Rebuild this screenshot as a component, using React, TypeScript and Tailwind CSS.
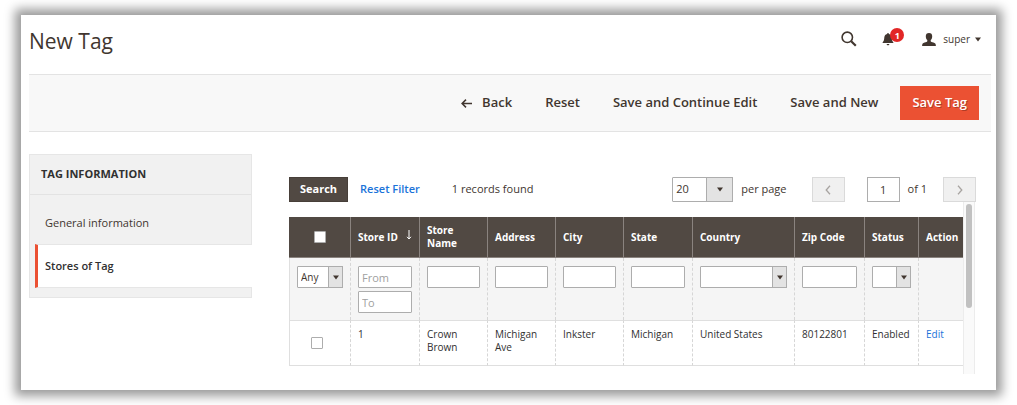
import type { ReactNode } from "react";

function Caret({ className = "" }: { className?: string }) {
  return (
    <svg viewBox="0 0 6 5" className={className} fill="currentColor" aria-hidden="true">
      <path d="M0 0.4h6L3 4.6z" />
    </svg>
  );
}

function SelectBox({
  label,
  options,
  className,
  arrowClass,
}: {
  label: string;
  options: string[];
  className: string;
  arrowClass: string;
}) {
  return (
    <span className={`relative block ${className}`}>
      <select
        aria-label={label}
        className="block h-full w-full appearance-none rounded-[1px] border border-[#adadad] bg-white pl-[3px] text-[#41362f]"
      >
        {options.map((o) => (
          <option key={o}>{o}</option>
        ))}
      </select>
      <span
        className={`pointer-events-none absolute inset-y-0 right-0 flex items-center justify-center border border-[#adadad] bg-[#e3e3e3] text-[#41362f] ${arrowClass}`}
      >
        <Caret className="h-[5px] w-[6px]" />
      </span>
    </span>
  );
}

function TextBox({ label, placeholder }: { label: string; placeholder?: string }) {
  return (
    <input
      type="text"
      aria-label={label}
      placeholder={placeholder}
      className="block h-[22px] w-full rounded-[1px] border border-[#adadad] bg-white px-[3px] text-[11px] placeholder:text-[#a0a0a0]"
    />
  );
}

function CheckBox({ label }: { label: string }) {
  return (
    <input
      type="checkbox"
      aria-label={label}
      className="block h-3 w-3 appearance-none rounded-[1px] border border-[#adadad] bg-white checked:bg-[#514943]"
    />
  );
}

function ActionButton({ children }: { children: ReactNode }) {
  return (
    <button type="button" className="flex items-center gap-[10px] whitespace-nowrap text-[13px] font-semibold text-[#41362f]">
      {children}
    </button>
  );
}

function PageButton({ label, d }: { label: string; d: string }) {
  return (
    <button
      type="button"
      aria-label={label}
      className="flex h-[25px] w-[33px] items-center justify-center border border-[#dadada] bg-[#f0f0f0] text-[#a8a4a1]"
    >
      <svg viewBox="0 0 6 10" className="h-[10px] w-[6px]" fill="none" stroke="currentColor" strokeWidth="1.3">
        <path d={d} />
      </svg>
    </button>
  );
}

const columns = [
  { name: "Store ID", col: "w-[69px]" },
  { name: "Store Name", col: "w-[68px]" },
  { name: "Address", col: "w-[68px]" },
  { name: "City", col: "w-[68px]" },
  { name: "State", col: "w-[69px]" },
  { name: "Country", col: "w-[102px]" },
  { name: "Zip Code", col: "w-[70px]" },
  { name: "Status", col: "w-[54px]" },
  { name: "Action", col: "w-[45px]" },
];

const record = ["1", "Crown Brown", "Michigan Ave", "Inkster", "Michigan", "United States", "80122801", "Enabled"];

const filterCell = "border-l border-dashed border-l-[#d6d6d6] px-[7px] pt-2 align-top";
const dataCell =
  "border-y border-l border-y-[#dfdfdf] border-l-[#d6d6d6] [border-block-style:solid] [border-left-style:dashed] pt-[7px] pl-[7px] pr-1 align-top";

function StoreTable() {
  return (
    <table className="w-full table-fixed border-separate border-spacing-0 text-[10px] leading-[13px] text-[#303030]">
      <colgroup>
        <col className="w-[61px]" />
        {columns.map((c) => (
          <col key={c.name} className={c.col} />
        ))}
      </colgroup>
      <thead>
        <tr className="h-[41px] bg-[#514943] text-left text-white">
          <th className="border-b border-[#8a837f] p-0">
            <div className="flex justify-center">
              <CheckBox label="Select all stores" />
            </div>
          </th>
          {columns.map((c) => (
            <th key={c.name} className="border-b border-l border-[#8a837f] py-0 pl-[7px] pr-1 font-bold">
              {c.name === "Store ID" ? (
                <span className="flex items-center justify-between pr-[3px]">
                  {c.name}
                  <svg viewBox="0 0 6 10" className="mb-1 h-[10px] w-[6px]" fill="none" stroke="currentColor">
                    <path d="M3 0v9M1 6.8l2 2.2 2-2.2" />
                  </svg>
                </span>
              ) : (
                c.name
              )}
            </th>
          ))}
        </tr>
      </thead>
      <tbody>
        <tr className="h-[62px] bg-[#f5f5f5]">
          <td className="border-l border-[#dfdfdf] px-[7px] pt-2 align-top">
            <SelectBox label="Selected" options={["Any", "Yes", "No"]} className="h-[22px]" arrowClass="w-[15px]" />
          </td>
          <td className={filterCell}>
            <div className="flex flex-col gap-[3px]">
              <TextBox label="Store ID from" placeholder="From" />
              <TextBox label="Store ID to" placeholder="To" />
            </div>
          </td>
          <td className={filterCell}><TextBox label="Store Name" /></td>
          <td className={filterCell}><TextBox label="Address" /></td>
          <td className={filterCell}><TextBox label="City" /></td>
          <td className={filterCell}><TextBox label="State" /></td>
          <td className={filterCell}>
            <SelectBox label="Country" options={["", "United States"]} className="h-[22px]" arrowClass="w-[15px]" />
          </td>
          <td className={filterCell}><TextBox label="Zip Code" /></td>
          <td className={filterCell}>
            <SelectBox label="Status" options={["", "Enabled", "Disabled"]} className="h-[22px]" arrowClass="w-[15px]" />
          </td>
          <td className={filterCell} />
        </tr>
        <tr className="h-[46px]">
          <td className="border-y border-l border-[#dfdfdf] p-0 pr-[7px]">
            <div className="flex justify-center">
              <CheckBox label="Select store 1" />
            </div>
          </td>
          {record.map((value) => (
            <td key={value} className={dataCell}>
              {value}
            </td>
          ))}
          <td className={dataCell}>
            <a href="#edit" className="text-[#1a73d9]">Edit</a>
          </td>
        </tr>
      </tbody>
    </table>
  );
}

export default function App() {
  return (
    <div className="px-[21px] py-[15px] font-['Open_Sans','Noto_Sans',sans-serif] text-[11px] text-[#41362f]">
      <div className="bg-white pb-4 pl-2 pr-[5px] shadow-[0_0_10px_6px_rgba(0,0,0,0.4)]">
        <header className="flex h-[59px] items-center justify-between pb-[7px] pr-[10px]">
          <h1 className="text-[21px] leading-7">New Tag</h1>
          <div className="flex items-center pb-1">
            <button type="button" aria-label="Search">
              <svg viewBox="0 0 16 16" className="h-4 w-4" fill="none" stroke="currentColor">
                <circle cx="6.3" cy="6.3" r="5.2" strokeWidth="1.6" />
                <path d="M10.2 10.2l4.6 4.6" strokeWidth="2.2" />
              </svg>
            </button>
            <button type="button" aria-label="Notifications" className="relative ml-[25px]">
              <svg viewBox="0 0 12 14" className="h-[14px] w-3" fill="currentColor">
                <path d="M6 1c.6 0 .9.4.9.9 1.900.4 2.700 1.900 2.800 3.700.1 2.300.5 3.600 1.900 5.400H.4c1.400-1.800 1.800-3.100 1.900-5.400.1-1.800.9-3.300 2.800-3.700C5.100 1.400 5.400 1 6 1zM4.600 12h2.800c-.1.800-.6 1.300-1.400 1.300S4.700 12.800 4.600 12z" />
              </svg>
              <span className="absolute -top-[4px] left-2 flex h-[14px] w-[14px] items-center justify-center rounded-full bg-[#e22626] text-[9px] font-bold leading-none text-white">
                1
              </span>
            </button>
            <button type="button" className="ml-7 flex items-center">
              <svg viewBox="0 0 14 13" className="h-[13px] w-[14px]" fill="currentColor">
                <path d="M7 0c2.100 0 3.300 1.200 3.200 3.400-.1 1.700-.6 2.900-1.500 3.700v1.100c.3.600 1.300.9 2.700 1.300 1.700.5 2.500 1.200 2.500 3.500H.1c0-2.300.8-3 2.500-3.500 1.400-.4 2.400-.7 2.700-1.300V7.100C4.400 6.300 3.900 5.100 3.800 3.400 3.700 1.200 4.900 0 7 0z" />
              </svg>
              <span className="ml-[7px] text-[10px]">super</span>
              <Caret className="ml-[5px] h-[5px] w-[6px]" />
            </button>
          </div>
        </header>

        <div className="flex h-[58px] items-center justify-end gap-[33px] border-y border-[#e3e3e3] bg-[#f8f8f8] pr-3">
          <ActionButton>
            <svg viewBox="0 0 11 9" className="h-[9px] w-[11px]" fill="none" stroke="currentColor" strokeWidth="1.5">
              <path d="M11 4.500H1.200M5 .6L1.100 4.500 5 8.400" />
            </svg>
            Back
          </ActionButton>
          <ActionButton>Reset</ActionButton>
          <ActionButton>Save and Continue Edit</ActionButton>
          <ActionButton>Save and New</ActionButton>
          <button
            type="button"
            className="-ml-[11px] h-[34px] whitespace-nowrap bg-[#eb5133] px-3 text-[13px] font-semibold text-white [text-shadow:1px_1px_0_rgba(0,0,0,0.25)]"
          >
            Save Tag
          </button>
        </div>

        <div className="flex items-start pr-[15px] pt-[22px]">
          <nav className="w-[223px] shrink-0 border border-[#e6e6e6] bg-[#f1f1f1] pb-[9px]">
            <h2 className="flex h-10 items-center border-b border-[#e3e3e3] pl-[11px] font-bold text-[#303030]">
              TAG INFORMATION
            </h2>
            <a href="#general" className="mt-2 flex h-[41px] items-center pl-[15px]">
              General information
            </a>
            <a
              href="#stores"
              className="-mr-px ml-[5px] flex h-11 items-center border-y border-l-[3px] border-y-[#e6e6e6] border-l-[#eb5133] bg-white pl-[7px] font-semibold text-[#303030]"
            >
              Stores of Tag
            </a>
          </nav>

          <main className="ml-[37px] min-w-0 grow pt-[23px]">
            <div className="flex h-[25px] items-center whitespace-nowrap">
              <button type="button" className="h-full border border-[#473f39] bg-[#514943] px-[10px] font-bold text-white">
                Search
              </button>
              <button type="button" className="ml-3 font-semibold text-[#1a73d9]">Reset Filter</button>
              <span className="ml-8">1 records found</span>
              <SelectBox
                label="Records per page"
                options={["20", "30", "50", "100"]}
                className="ml-auto h-[25px] w-[61px]"
                arrowClass="w-[27px]"
              />
              <span className="ml-2">per page</span>
              <span className="ml-[25px]">
                <PageButton label="Previous page" d="M5 .7L1.200 5 5 9.300" />
              </span>
              <input
                type="text"
                aria-label="Page"
                defaultValue="1"
                className="ml-[22px] h-[25px] w-[33px] border border-[#adadad] bg-white text-center"
              />
              <span className="ml-2">of 1</span>
              <span className="ml-4">
                <PageButton label="Next page" d="M1 .7L4.800 5 1 9.300" />
              </span>
            </div>
            <div className="flex">
              <div className="min-w-0 grow pb-2 pt-[15px]">
                <StoreTable />
              </div>
              <div className="mr-px w-3 shrink-0 border-x border-[#ececec] bg-[#fafafa] px-[2px] pt-[2px]">
                <div className="h-[104px] rounded-full bg-[#c1c1c1]" />
              </div>
            </div>
          </main>
        </div>
      </div>
    </div>
  );
}
